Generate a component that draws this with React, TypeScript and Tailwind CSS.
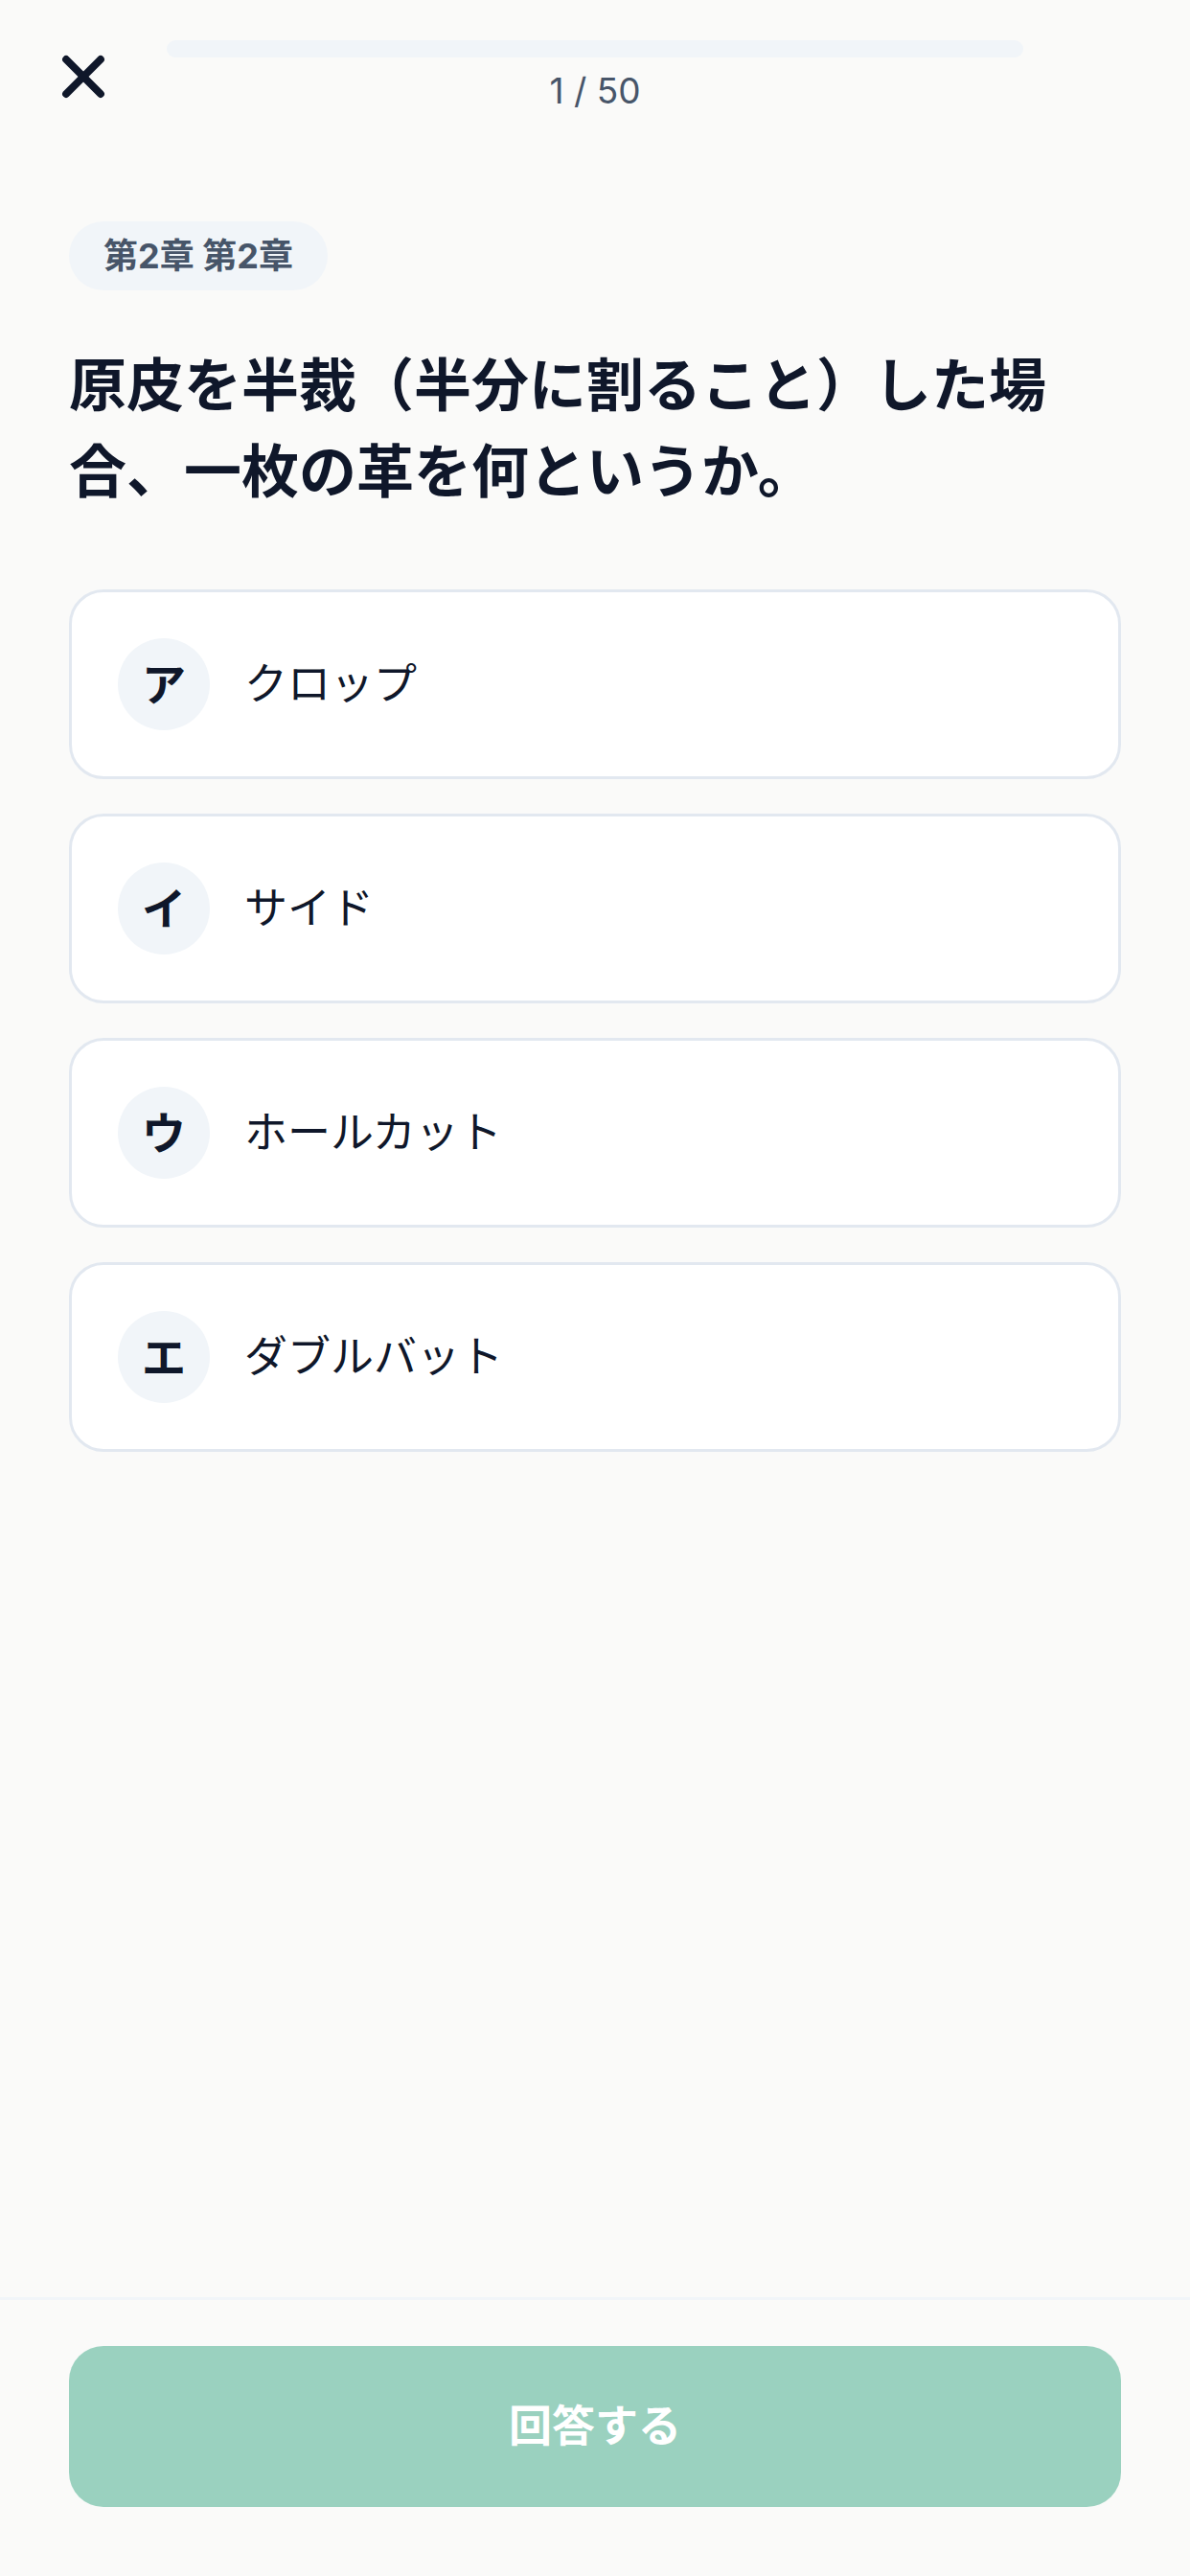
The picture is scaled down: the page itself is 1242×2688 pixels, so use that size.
import { X } from "lucide-react";

const options = [
  { key: "ア", label: "クロップ" },
  { key: "イ", label: "サイド" },
  { key: "ウ", label: "ホールカット" },
  { key: "エ", label: "ダブルバット" },
];

const App = () => {
  return (
    <div className="min-h-screen flex flex-col bg-[#fafaf9] font-['Inter','Noto_Sans_CJK_JP',sans-serif] text-[#0f172a]">
      {/* ヘッダー */}
      <header className="flex items-center px-[48px] pt-[42px]">
        <button className="w-[126px] flex items-center">
          <X className="ml-[3px] text-[#0f172a]" size={72} strokeWidth={2.6} />
        </button>
        <div className="flex-1 flex flex-col items-center">
          <div className="w-full h-[18px] rounded-full bg-[#f1f5f9]" />
          <span className="mt-[13px] text-[37px] leading-[44px] text-[#475569]">1 / 50</span>
        </div>
        <div className="w-[126px]" />
      </header>

      {/* 問題 */}
      <main className="px-[72px] pt-[114px]">
        <span className="inline-flex h-[72px] items-center px-[36px] rounded-full bg-[#f1f5f9] text-[36px] font-bold text-[#475569]">
          第2章 第2章
        </span>

        <h1 className="mt-[54px] text-[60px] leading-[90px] font-bold text-[#0f172a]">
          原皮を半裁（半分に割ること）した場合、一枚の革を何というか。
        </h1>

        <div className="mt-[78px] flex flex-col gap-[36px]">
          {options.map((opt) => (
            <button
              key={opt.key}
              className="flex items-center gap-[36px] p-[48px] bg-white border-[3px] border-[#e2e8f0] rounded-[36px] text-left"
            >
              <span className="w-[96px] h-[96px] shrink-0 rounded-full bg-[#f1f5f9] flex items-center justify-center text-[46px] font-bold">
                {opt.key}
              </span>
              <span className="text-[45px] leading-[64px]">{opt.label}</span>
            </button>
          ))}
        </div>
      </main>

      {/* フッター */}
      <footer className="mt-auto border-t-[3px] border-[#f1f5f9] px-[72px] pt-[48px] pb-[72px]">
        <button className="w-full h-[168px] rounded-[36px] bg-[#9ad1bf] text-white text-[45px] font-bold">
          回答する
        </button>
      </footer>
    </div>
  );
};

export default App;
